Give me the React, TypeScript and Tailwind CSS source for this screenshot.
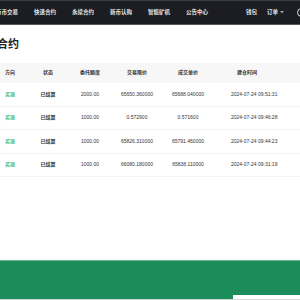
import React from 'react';

const navItems = ['币币交易', '快速合约', '永续合约', '新币认购', '智能矿机', '公告中心'];

interface Order {
  price: string;
  limit: string;
  deal: string;
  time: string;
}

const orders: Order[] = [
  { price: '2000.00', limit: '65650.360000', deal: '65688.040000', time: '2024-07-24 09:51:31' },
  { price: '1000.00', limit: '0.572900', deal: '0.571600', time: '2024-07-24 09:46:28' },
  { price: '1000.00', limit: '65826.310000', deal: '65791.460000', time: '2024-07-24 09:44:23' },
  { price: '1000.00', limit: '66080.180000', deal: '65838.110000', time: '2024-07-24 09:31:19' },
];

const cols = 'grid grid-cols-[29px_38px_46px_48px_54px_1fr] items-center';

const App: React.FC = () => {
  return (
    <div
      className="w-[300px] h-[300px] overflow-hidden bg-white flex flex-col"
      style={{ fontFamily: '"Liberation Sans", "Noto Sans CJK SC", sans-serif' }}
    >
      {/* Header */}
      <div className="h-[25px] shrink-0 bg-[#1c1d22] border-t border-[#3a3b40] border-b border-b-[#55565b] flex items-center text-[5.5px] font-bold text-[#e6e6e6]">
        <div className="flex items-center gap-[16px] -ml-[4px]">
          {navItems.map((item) => (
            <span key={item} className="w-[22px] whitespace-nowrap">
              {item}
            </span>
          ))}
        </div>
        <div className="ml-auto flex items-center gap-[10px] -mr-[6px]">
          <span>钱包</span>
          <span className="flex items-center gap-[2px]">
            订单
            <svg width="4" height="3" viewBox="0 0 4 3">
              <path d="M0 0 L4 0 L2 2.5 Z" fill="#9aa0a8" />
            </svg>
          </span>
          <span className="ml-[3px] w-[9px] h-[9px] rounded-full border border-[#e6e6e6]" />
        </div>
      </div>

      {/* Title */}
      <div className="h-[38px] shrink-0 flex items-center -ml-[3px] text-[11px] font-bold text-[#222] leading-none">
        合约
      </div>

      {/* Table */}
      <div className="text-[5px] text-[#333]">
        <div className={`${cols} h-[20px] bg-[#f7f7f7] font-bold`}>
          <span className="pl-[5px]">方向</span>
          <span className="text-center">状态</span>
          <span className="text-center">委托额度</span>
          <span className="text-center">交易限价</span>
          <span className="text-center">成交单价</span>
          <span className="pl-[22px]">建仓时间</span>
        </div>
        {orders.map((o, i) => (
          <div key={i} className={`${cols} h-[23.5px] border-b border-[#f3f3f3]`}>
            <span className="pl-[5px] font-bold text-[#2ebd85]">买涨</span>
            <span className="text-center font-bold">已结算</span>
            <span className="text-center">{o.price}</span>
            <span className="text-center">{o.limit}</span>
            <span className="text-center">{o.deal}</span>
            <span className="pl-[16px] whitespace-nowrap">{o.time}</span>
          </div>
        ))}
      </div>

      <div className="flex-1" />

      {/* Footer */}
      <div className="shrink-0 flex flex-col">
        <div className="h-[35px] bg-[#1d8c5b] border-t border-[#6fb896]" />
        <div className="h-[4px] flex">
          <div className="flex-1 bg-[#1d8c5b]" />
          <div className="w-[67px] bg-white" />
        </div>
        <div className="h-[1px] bg-[#d6d6d6]" />
      </div>
    </div>
  );
};

export default App;
